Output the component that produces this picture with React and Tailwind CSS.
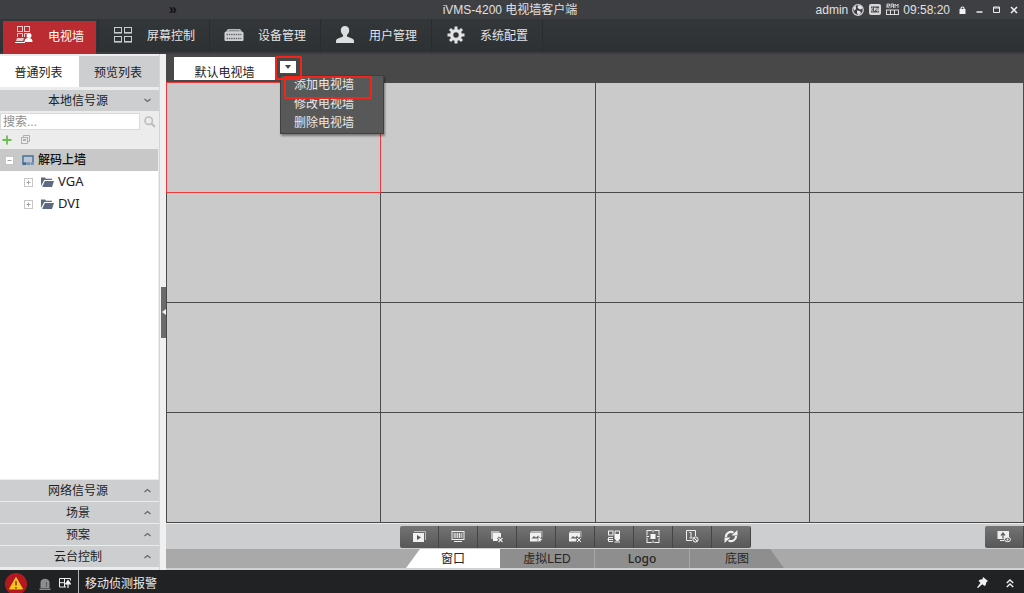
import React from "react";

/* ---------- icons ---------- */

const WallIcon = () => (
  <svg width="18" height="18" viewBox="0 0 18 18" fill="none" stroke="#ecc9cb" strokeWidth="1">
    <rect x="2.5" y="0.5" width="5" height="5" />
    <rect x="9.5" y="0.5" width="5" height="5" />
    <path d="M2.500 11V7.500h5V11M9.500 11V7.500h3" />
    <circle cx="14" cy="9.500" r="2.500" fill="#fff" stroke="none" />
    <path d="M9.500 16c0-2.500 1-4 4-4s4 1.500 4 4z" fill="#fff" stroke="none" />
    <path d="M0 16.500h10" stroke="#fff" />
    <path d="M2 12h7l-1 3H1z" fill="#ecc9cb" stroke="none" />
  </svg>
);
const ScreensIcon = () => (
  <svg width="18" height="18" viewBox="0 0 18 18" fill="none" stroke="#c9cbcc" strokeWidth="1">
    <rect x="0.5" y="1.5" width="7" height="5" />
    <rect x="10.5" y="1.5" width="7" height="5" />
    <rect x="0.5" y="10.5" width="7" height="5" />
    <rect x="10.5" y="10.5" width="7" height="5" />
    <path d="M0 7.500h8M10 7.500h8M0 16.500h8M10 16.500h8" strokeWidth="0.6" />
  </svg>
);
const DeviceIcon = () => (
  <svg width="20" height="14" viewBox="0 0 20 14">
    <path d="M4 1h12l3 3.500H1z" fill="#b4b7b8" />
    <rect x="0.500" y="4" width="19" height="9" rx="1" fill="#d0d2d3" />
    <path d="M2.500 6.500h15M2.500 10.500h15" stroke="#62676a" strokeWidth="1.600" strokeDasharray="1.500 0.800" />
    <path d="M5 2.500h10" stroke="#777b7d" strokeWidth="0.7" />
  </svg>
);
const UserIcon = () => (
  <svg width="18" height="17" viewBox="0 0 18 17" fill="#dcdedf">
    <path d="M9 0c2.600 0 4.200 1.700 4.200 4.200 0 2-.9 3.700-2.200 4.700v1.600l5 1.900c1.300.5 2 1.400 2 3V17H0v-1.600c0-1.600.7-2.500 2-3l5-1.900V8.900C5.700 7.900 4.800 6.200 4.800 4.200 4.800 1.700 6.400 0 9 0z" />
  </svg>
);
const GearIcon = () => (
  <svg width="18" height="18" viewBox="0 0 18 18">
    <circle cx="9" cy="9" r="4.400" fill="none" stroke="#e2e3e4" strokeWidth="3.400" />
    <path
      d="M9 0.500v3.500M9 14v3.500M0.500 9H4M14 9h3.500M3 3l2.500 2.500M12.500 12.500l2.500 2.500M3 15l2.500-2.500M12.500 5.500L15 3"
      stroke="#e2e3e4"
      strokeWidth="3"
    />
  </svg>
);
const GlobeIcon = () => (
  <svg width="12" height="12" viewBox="0 0 12 12">
    <circle cx="6" cy="6" r="5.300" fill="#3e3e42" stroke="#d6d6d8" strokeWidth="1.200" />
    <path d="M6 1.500h2.500L10.500 4 9 5.500 7 5 5.500 3.500zM5 6.500l3 .5 1 2-2.500 2-1.500-2zM1.500 4L4 2v2.500L2.500 7z" fill="#e4e4e6" />
  </svg>
);
const CpuIcon = () => (
  <svg width="12" height="11" viewBox="0 0 12 11">
    <rect x="0" y="0" width="12" height="11" rx="2" fill="#d6d6d8" />
    <rect x="2" y="2.500" width="8" height="6" fill="#505054" />
    <path d="M4 4H2.800v3H4M5.500 7V4h1.200v1.500H5.500M8 4v3h1.200V4" fill="none" stroke="#eee" strokeWidth="0.8" />
  </svg>
);
const RamIcon = () => (
  <svg width="13" height="13" viewBox="0 0 13 13" fill="none" stroke="#dcdcde">
    <path d="M1 5V1h2.500v2H1l2.500 2M5 5V1h2.500v4M5 3h2.500M9 5V1l1.500 2L12 1v4" strokeWidth="0.9" />
    <rect x="0.500" y="7" width="12" height="4.500" />
    <path d="M4.500 7v5M8.500 7v5" />
  </svg>
);
const LockIcon = () => (
  <svg width="7" height="8" viewBox="0 0 7 8">
    <path d="M2 4V2.200C2 .6 5 .6 5 2.200V4" fill="none" stroke="#eee" strokeWidth="1.200" />
    <rect x="0.500" y="3" width="6" height="5" fill="#f2f2f2" />
  </svg>
);
const Chevron = ({ up }) => (
  <svg width="7" height="5" viewBox="0 0 7 5" fill="none" stroke="#666" strokeWidth="1.200">
    <path d={up ? "M0.500 4L3.500 1.500 6.500 4" : "M0.500 1L3.500 3.500 6.500 1"} />
  </svg>
);
const SearchIcon = () => (
  <svg width="12" height="12" viewBox="0 0 12 12" fill="none" stroke="#bdbdbd" strokeWidth="1.600">
    <circle cx="4.700" cy="4.700" r="3.700" />
    <path d="M7.500 7.500L11 11" strokeWidth="2" />
  </svg>
);
const PlusIcon = () => (
  <svg width="10" height="10" viewBox="0 0 10 10">
    <path d="M5 0.500v9M0.500 5h9" stroke="#6bbd50" strokeWidth="1.800" />
  </svg>
);
const CopyIcon = () => (
  <svg width="9" height="9" viewBox="0 0 9 9" fill="none" stroke="#b0b0b0">
    <path d="M2.500 2V0.500h6v6H7" />
    <rect x="0.500" y="2.500" width="6" height="6" />
    <path d="M2 5.500h3M2 4.500h3" />
  </svg>
);
const Expander = ({ open }) => (
  <svg width="9" height="9" viewBox="0 0 9 9" stroke="#c6c6c6">
    <rect x="0.500" y="0.500" width="8" height="8" fill="#fff" />
    <path d={open ? "M2.500 4.500h4" : "M2.500 4.500h4M4.500 2.500v4"} stroke="#a4a4a4" />
  </svg>
);
const MonitorIcon = () => (
  <svg width="12" height="11" viewBox="0 0 12 11">
    <path d="M1 8V1h10v7" fill="none" stroke="#3f6d9e" strokeWidth="1.400" />
    <rect x="2" y="2" width="8" height="5" fill="#bcc6d0" />
    <path d="M0.300 7.300h4.200V10H0.300z" fill="#3f6d9e" />
    <path d="M5 7.300h3V10H5zM8.700 7.300h3V10h-3z" fill="#6f93b8" />
  </svg>
);
const FolderIcon = () => (
  <svg width="13" height="10" viewBox="0 0 13 10" fill="#5f6a82">
    <path d="M0 9V0.500h4l1 1.200h6V3H3.200z" />
    <path d="M3.800 4H13l-2 6H1.200z" />
  </svg>
);
const AlarmIcon = () => (
  <svg width="22" height="22" viewBox="0 0 22 22">
    <circle cx="11" cy="11" r="11" fill="#b3191f" />
    <path d="M11 4.500l6.500 11.500h-13z" fill="#f8c61c" stroke="#f8c61c" strokeLinejoin="round" />
    <path d="M11 8v4.500M11 14v1.800" stroke="#7c3a10" strokeWidth="1.500" />
  </svg>
);
const SirenIcon = () => (
  <svg width="12" height="12" viewBox="0 0 12 12" fill="#8d8d8f">
    <path d="M1.500 10V4.500C1.500 -0.500 10.500 -0.500 10.500 4.500V10zM0.500 10.500h11V12H0.500z" />
    <path d="M7.500 4v5" stroke="#5d5d5f" />
  </svg>
);
const PopIcon = () => (
  <svg width="12" height="10" viewBox="0 0 12 10" fill="none" stroke="#efefef">
    <path d="M8 0.500H0.500v8.500H7M0.500 4.700H6M5.500 0.500V9" />
    <path d="M9 10V5M6.500 6L9 2.500 11.500 6z" fill="#fff" strokeWidth="1.200" />
    <path d="M8 0.500h3.500v2" />
  </svg>
);
const PinIcon = () => (
  <svg width="11" height="11" viewBox="0 0 11 11" fill="#f2f2f2">
    <path d="M6 0L11 4 9.300 5.200 8.800 8 7.500 9 5.300 7.200 1 11 0 10.500 3.500 5.700 1.500 4l1.200-1.200L5.500 2.300z" />
  </svg>
);
const DoubleUpIcon = () => (
  <svg width="8" height="9" viewBox="0 0 8 9" fill="none" stroke="#ececec" strokeWidth="1.500">
    <path d="M0.800 4L4 1l3.200 3M0.800 8L4 5l3.200 3" />
  </svg>
);

const Tool = ({ children }) => (
  <svg width="14" height="13" viewBox="0 0 14 13" fill="none" stroke="#f0f0f0">
    {children}
  </svg>
);
const tools = [
  ["播放", <Tool key="a"><path d="M2 1.500h11.500V10" stroke="#bbb" /><rect x="1" y="3" width="11" height="9" fill="#f0f0f0" stroke="none" /><path d="M5 5l4 2.500L5 10z" fill="#555" stroke="none" /></Tool>],
  ["暂停", <Tool key="b"><rect x="1" y="1.500" width="12" height="8" /><path d="M2.500 3h2.500v5H2.500zM9.500 3h2v5h-2z" fill="#bbb" stroke="none" /><path d="M6.200 3v5M8.300 3v5" strokeWidth="1.200" /><path d="M3 11.500h8" /></Tool>],
  ["关闭窗口", <Tool key="c"><rect x="1" y="1" width="8.500" height="8" fill="#b5b5b5" stroke="none" /><rect x="3" y="3" width="8" height="8" fill="#f3f3f3" stroke="none" /><path d="M8 7.500l4.500 4.500M12.500 7.500L8 12" stroke="#555" strokeWidth="2.500" /><path d="M8.500 8l4 4M12.500 8l-4 4" strokeWidth="1.200" /></Tool>],
  ["开始轮巡", <Tool key="d"><path d="M2 1.500h11v6" stroke="#bbb" /><rect x="1" y="2.500" width="11" height="9" fill="#f0f0f0" stroke="none" /><path d="M2.500 8.500l2.500-2.500 2 1.500 2.500-2v3z" fill="#666" stroke="none" /><path d="M9 6.500l4.500 3L9 12.500z" fill="#fff" stroke="#666" strokeWidth="0.700" /></Tool>],
  ["停止轮巡", <Tool key="e"><path d="M2 1.500h11v6" stroke="#bbb" /><rect x="1" y="2.500" width="11" height="9" fill="#f0f0f0" stroke="none" /><path d="M2.500 8.500l2.500-2.500 2 1.500 2.500-2v3z" fill="#666" stroke="none" /><path d="M8.500 7.500L13 12M13 7.500L8.500 12" stroke="#666" strokeWidth="2.500" /><path d="M9 8l4 4M13 8l-4 4" /></Tool>],
  ["布局", <Tool key="f"><rect x="1.500" y="1" width="4.500" height="4" /><path d="M6 7.500H1.500v4H6M0.500 9.500H6" /><path d="M8 4V1h4.500v3" /><path d="M7.500 4h5.500v4.500L11.500 11H9.500L7.500 8.500z" fill="#f5f5f5" stroke="none" /><path d="M7.500 12h5.500" /></Tool>],
  ["全屏", <Tool key="g"><rect x="1" y="0.500" width="12" height="12" strokeWidth="1" /><path d="M7 0v3M7 10v3M0.500 6.500h3M10.500 6.500h3" stroke="#666" strokeWidth="2.500" /><path d="M7 0v2.500M7 10.500V13M0.500 6.500H3M11 6.500h2.500" /><rect x="4.500" y="4" width="5" height="5" fill="#f5f5f5" stroke="none" /></Tool>],
  ["隐藏编号", <Tool key="h"><path d="M7 10.500H1.500v-10h9V6" /><path d="M4.500 2.500h1.500v5.500M4.500 8h3" /><circle cx="10.500" cy="9.500" r="2.600" fill="#777" /><path d="M8.500 7.500l4 4" /></Tool>],
  ["刷新", <Tool key="i"><path d="M2 7A5 4.700 0 0 1 9.500 2.600M12 6A5 4.700 0 0 1 4.500 10.400" strokeWidth="2.200" /><path d="M7.500 5.500H13.500V0zM6.500 7.500H0.500V13z" fill="#f0f0f0" stroke="none" /></Tool>],
];

/* ---------- header ---------- */

function TitleBar() {
  return (
    <div className="grid h-[19px] shrink-0 grid-cols-[1fr_auto_1fr] items-center bg-[#3e3f42] pr-1 text-[#e0e0e1]">
      <button className="ml-[169px] w-4 pb-0.5 text-left text-sm leading-4 font-bold text-[#111]" aria-label="更多">»</button>
      <h1 className="text-xs leading-4">iVMS-4200 电视墙客户端</h1>
      <div className="flex items-center justify-end">
        <span className="mr-1 text-xs leading-4">admin</span>
        <div className="mr-1 flex items-center gap-[5px]"><GlobeIcon /><CpuIcon /><RamIcon /></div>
        <time className="mr-[9px] text-xs leading-4">09:58:20</time>
        <div className="flex items-center gap-2.5 pr-0.5">
          <button aria-label="锁定"><LockIcon /></button>
          <button aria-label="最小化"><svg width="7" height="8" viewBox="0 0 7 8"><path d="M0.500 6h6" stroke="#eee" strokeWidth="1.500" /></svg></button>
          <button aria-label="最大化"><svg width="7" height="8" viewBox="0 0 7 8"><path d="M0.500 1h6v5.500h-6zM0.500 2h6" fill="none" stroke="#eee" /></svg></button>
          <button aria-label="关闭"><svg width="8" height="8" viewBox="0 0 8 8"><path d="M1 1l6 6M7 1L1 7" stroke="#eee" strokeWidth="1.600" /></svg></button>
        </div>
      </div>
    </div>
  );
}

const navItems = [
  ["屏幕控制", <ScreensIcon key="s" />],
  ["设备管理", <DeviceIcon key="d" />],
  ["用户管理", <UserIcon key="u" />],
  ["系统配置", <GearIcon key="g" />],
];

function Nav() {
  return (
    <nav className="flex h-[35px] shrink-0 items-start border-b-2 border-[#3a3d3f] bg-linear-to-b from-[#34373a] to-[#2d3133] pl-[3px] text-xs text-[#e3e4e5]">
      <button className="mt-0.5 mr-0.5 flex h-[33px] w-[93px] items-center gap-[15px] bg-[#bb2b32] pb-0.5 pl-3 text-white">
        <span className="pb-1"><WallIcon /></span>电视墙
      </button>
      {navItems.map(([label, icon]) => (
        <button key={label} className="flex h-[33px] w-[111px] items-center gap-3.5 border-l border-[#2a2d2f] pl-3.5">
          <span className="flex w-5 justify-center pb-0.5">{icon}</span>
          <span className="pt-px">{label}</span>
        </button>
      ))}
      <span className="h-[33px] border-l border-[#2a2d2f]" />
    </nav>
  );
}

/* ---------- left panel ---------- */

function SectionHeader({ label, up }) {
  return (
    <button className="flex h-[21px] w-full shrink-0 items-center bg-[#cdced0] px-2 text-xs text-[#222]">
      <span className="flex-1 pt-px pl-1 text-center">{label}</span>
      <Chevron up={up} />
    </button>
  );
}

function Sidebar() {
  return (
    <aside className="flex w-[159px] shrink-0 flex-col bg-[#ececec] pt-0.5 pb-[3px] text-xs text-[#222]">
      <div className="mb-[3px] flex h-[31px] shrink-0">
        <button className="w-[79px] bg-white pt-0.5 pr-0.5">普通列表</button>
        <button className="flex-1 bg-[#cdced0] pt-0.5 pr-0.5">预览列表</button>
      </div>
      <SectionHeader label="本地信号源" />
      <div className="mt-0.5 flex h-[17px] shrink-0 items-center">
        <input aria-label="搜索" placeholder="搜索..." className="h-[17px] w-[140px] border border-[#dadada] bg-white pl-0.5 text-xs text-[#222] outline-none placeholder:text-[#8d8d8d]" />
        <button aria-label="执行搜索" className="flex flex-1 justify-center"><SearchIcon /></button>
      </div>
      <div className="flex h-[19px] shrink-0 items-center gap-[9px] pl-0.5">
        <button aria-label="添加"><PlusIcon /></button>
        <button aria-label="复制"><CopyIcon /></button>
      </div>
      <ul className="mr-px min-h-0 flex-1 bg-white">
        <li className="flex h-[22px] items-center bg-[#c8c8c8] pl-[5px] font-medium text-[#111]">
          <Expander open /><span className="mr-1 ml-2"><MonitorIcon /></span>
          <span>解码上墙</span>
        </li>
        {["VGA", "DVI"].map((name) => (
          <li key={name} className="flex h-[22px] items-center pl-6 font-[Noto_Sans,sans-serif] text-[13px]">
            <Expander /><span className="mr-1 ml-2"><FolderIcon /></span>{name}
          </li>
        ))}
      </ul>
      <div className="mt-px flex flex-col gap-px">
        {["网络信号源", "场景", "预案", "云台控制"].map((t) => (
          <SectionHeader key={t} label={t} up />
        ))}
      </div>
    </aside>
  );
}

/* ---------- wall area ---------- */

function WallTabs() {
  return (
    <div className="relative flex h-7 shrink-0 items-start bg-[#484848] pt-[3px] pl-2 text-xs">
      <button className="flex h-[23px] w-[101px] items-end justify-center overflow-hidden bg-white text-[#222]">
        <span className="-mb-px leading-4">默认电视墙</span>
      </button>
      <button aria-label="电视墙菜单" className="mt-1 ml-[5px] flex h-3 w-4 items-center justify-center bg-white">
        <svg width="6" height="4" viewBox="0 0 6 4"><path d="M0 0h6L3 4z" fill="#444" /></svg>
      </button>
      <div className="pointer-events-none absolute top-0.5 left-[109px] z-20 h-6 w-[27px] rounded-xs border-2 border-[#f3241c]" />
      <div role="menu" className="absolute top-[21px] left-[114px] z-10 flex w-[104px] flex-col border border-[#404040] bg-[#585858] text-[#e8e8e8] shadow-[1px_2px_2px_#0006]">
        {["添加电视墙", "修改电视墙", "删除电视墙"].map((t) => (
          <button key={t} role="menuitem" className="h-[19px] pl-[13px] text-left leading-[19px]">{t}</button>
        ))}
        <div className="pointer-events-none absolute top-0 left-[3px] h-[23px] w-[88px] rounded-xs border-2 border-[#f3241c]" />
      </div>
    </div>
  );
}

function WallGrid() {
  return (
    <div className="grid min-h-0 flex-1 grid-cols-4 grid-rows-4 border-t border-l border-[#4a4a4a] bg-[#cacaca]">
      {Array.from({ length: 16 }, (_, i) => (
        <div
          key={i}
          className={
            i === 0
              ? "-mt-px -ml-px border border-[#f0393b]"
              : "border-r border-b border-[#4a4a4a]"
          }
        />
      ))}
    </div>
  );
}

const toolButton = "flex h-[22px] w-[39px] items-center justify-center border-r border-[#454545] bg-linear-to-b from-[#747474] to-[#575757]";

function Toolbar() {
  return (
    <div className="flex h-[26px] shrink-0 items-center border-t border-[#ececec] bg-[#cdced0]">
      <div className="flex flex-1 justify-center">
        <div className="flex overflow-hidden rounded-xs">
          {tools.map(([label, icon]) => (
            <button key={label} aria-label={label} className={toolButton}>{icon}</button>
          ))}
        </div>
      </div>
      <button aria-label="上墙" className={toolButton + " rounded-l-xs"}>
        <Tool><rect x="0.500" y="1" width="11.500" height="8" fill="#eee" stroke="none" /><path d="M6 8.500V4M4 5.500l2-2.500 2 2.500" stroke="#555" strokeWidth="1.200" /><path d="M3 10.500h4" /><ellipse cx="10.500" cy="9.500" rx="3" ry="2.200" fill="#666" /><circle cx="10.500" cy="9.500" r="1" fill="#eee" stroke="none" /></Tool>
      </button>
    </div>
  );
}

function ViewTabs() {
  return (
    <div className="flex h-[21px] shrink-0 justify-center border-b-2 border-[#d2d2d2] bg-[#a9a9a9] text-xs text-[#262626]">
      <button className="w-[94px] bg-white pt-px [clip-path:polygon(14px_0,100%_0,100%_100%,0_100%)]">窗口</button>
      <button className="w-[94px] bg-[#8e8e8e] pt-px">虚拟LED</button>
      <button className="w-[95px] border-l border-[#a6a6a6] bg-[#8e8e8e] pt-px font-[Noto_Sans,sans-serif] font-medium">Logo</button>
      <button className="w-[95px] border-l border-[#a6a6a6] bg-[#8e8e8e] pt-px [clip-path:polygon(0_0,81px_0,100%_100%,0_100%)]">底图</button>
    </div>
  );
}

function StatusBar() {
  return (
    <footer className="flex h-[23px] shrink-0 items-center bg-[#212224] text-xs text-[#ececec]">
      <button aria-label="报警" className="mr-3 ml-[5px] h-5 self-end overflow-hidden"><AlarmIcon /></button>
      <button aria-label="声音" className="mr-2 pt-1"><SirenIcon /></button>
      <button aria-label="弹出" className="mr-[7px] pt-0.5"><PopIcon /></button>
      <span className="h-full w-px bg-[#b8b8b8]" />
      <span className="ml-1.5 flex-1 pt-1">移动侦测报警</span>
      <button aria-label="固定" className="mr-[18px] pt-0.5"><PinIcon /></button>
      <button aria-label="展开" className="mr-2.5 pt-1"><DoubleUpIcon /></button>
    </footer>
  );
}

export default function App() {
  return (
    <div className="flex h-screen flex-col overflow-hidden bg-[#ececec] font-['Liberation_Sans','Noto_Sans_CJK_SC',sans-serif]">
      <TitleBar />
      <Nav />
      <div className="flex min-h-0 flex-1">
        <Sidebar />
        <div className="flex w-[7px] shrink-0 items-center justify-end border-l border-[#d4d4d4] bg-[#f0f0f0]">
          <button aria-label="折叠面板" className="flex h-[51px] w-[5px] items-center justify-end bg-[#6a6a6a]">
            <svg width="4" height="6" viewBox="0 0 4 6"><path d="M4 0v6L0 3z" fill="#f4f4f4" /></svg>
          </button>
        </div>
        <main className="flex min-w-0 flex-1 flex-col">
          <WallTabs />
          <WallGrid />
          <Toolbar />
          <ViewTabs />
        </main>
      </div>
      <StatusBar />
    </div>
  );
}
